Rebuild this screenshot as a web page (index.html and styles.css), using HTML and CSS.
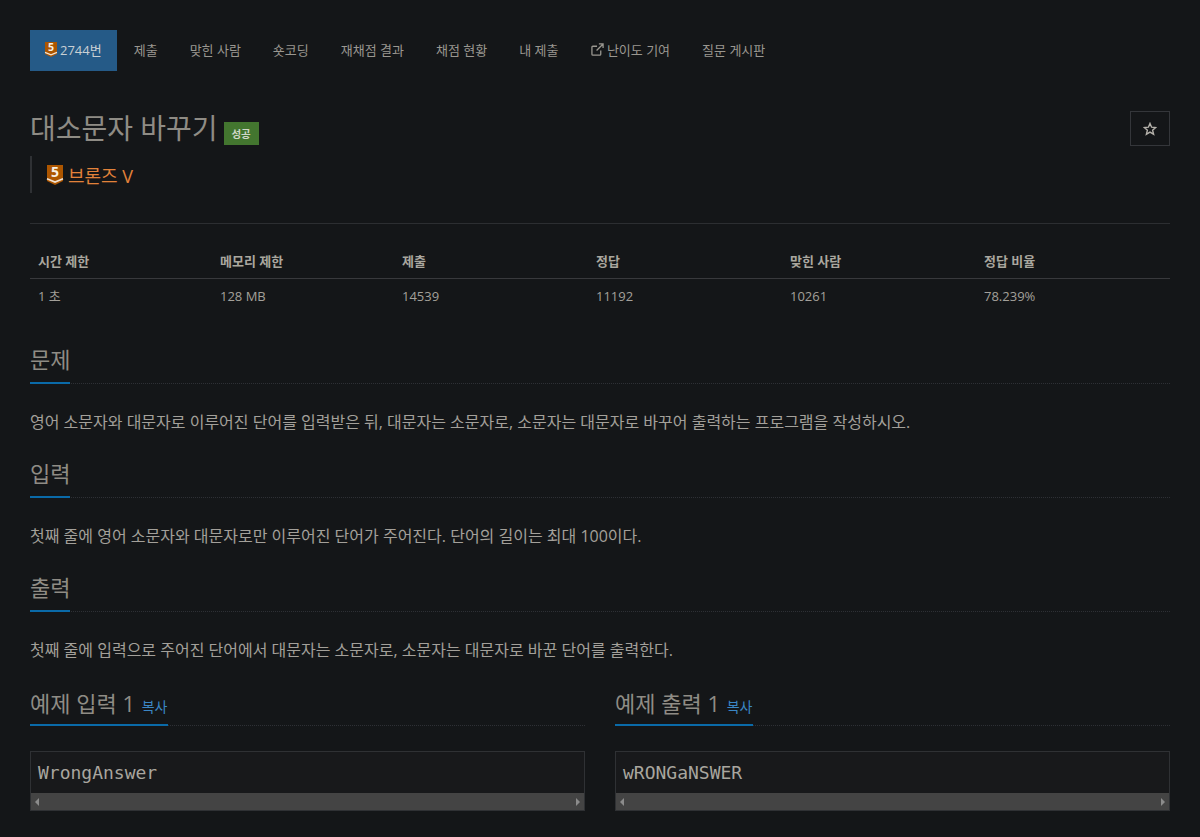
FILE: index.html
```html
<!DOCTYPE html>
<html lang="ko">
<head>
<meta charset="utf-8">
<title>대소문자 바꾸기</title>
<link rel="stylesheet" href="styles.css">
</head>
<body>
<nav class="tabs">
  <a class="tab active"><svg class="tier tier-sm" viewBox="0 0 12 15"><path class="tier-bg" d="M0 0H12V12L6 15L0 12Z"/><path class="tier-cut" d="M0 10.4L6 12.8L12 10.4" /><text x="6" y="9.2" class="tier-num">5</text></svg>2744번</a>
  <a class="tab">제출</a>
  <a class="tab">맞힌 사람</a>
  <a class="tab">숏코딩</a>
  <a class="tab">재채점 결과</a>
  <a class="tab">채점 현황</a>
  <a class="tab">내 제출</a>
  <a class="tab"><svg class="ext" viewBox="0 0 14 14"><path d="M10.5 8V12A1 1 0 0 1 9.5 13H2A1 1 0 0 1 1 12V4.5A1 1 0 0 1 2 3.5H6.5M8.5 1H13V5.5M13 1L6 8"/></svg>난이도 기여</a>
  <a class="tab">질문 게시판</a>
</nav>

<header class="title-row">
  <div class="title-main">
    <h1 class="title">대소문자 바꾸기</h1>
    <span class="badge">성공</span>
  </div>
  <button class="star" aria-label="즐겨찾기"><svg viewBox="0 0 14 14"><path d="M7 1.4L8.6 5.2L12.7 5.5L9.6 8.2L10.6 12.2L7 10.1L3.4 12.2L4.4 8.2L1.3 5.5L5.4 5.2Z"/></svg></button>
</header>

<blockquote class="tier-quote"><svg class="tier tier-lg" viewBox="0 0 12 15"><path class="tier-bg" d="M0 0H12V12L6 15L0 12Z"/><path class="tier-cut" d="M0 10.4L6 12.8L12 10.4"/><text x="6" y="9.2" class="tier-num">5</text></svg><span>브론즈 V</span></blockquote>

<hr class="rule">

<table class="stats">
  <thead>
    <tr><th class="c1">시간 제한</th><th class="c2">메모리 제한</th><th class="c3">제출</th><th class="c3">정답</th><th class="c3">맞힌 사람</th><th>정답 비율</th></tr>
  </thead>
  <tbody>
    <tr><td>1 초</td><td>128 MB</td><td>14539</td><td>11192</td><td>10261</td><td>78.239%</td></tr>
  </tbody>
</table>

<section class="section">
  <div class="head"><h2><span>문제</span></h2></div>
  <p>영어 소문자와 대문자로 이루어진 단어를 입력받은 뒤, 대문자는 소문자로, 소문자는 대문자로 바꾸어 출력하는 프로그램을 작성하시오.</p>
</section>
<section class="section">
  <div class="head"><h2><span>입력</span></h2></div>
  <p>첫째 줄에 영어 소문자와 대문자로만 이루어진 단어가 주어진다. 단어의 길이는 최대 100이다.</p>
</section>
<section class="section">
  <div class="head"><h2><span>출력</span></h2></div>
  <p>첫째 줄에 입력으로 주어진 단어에서 대문자는 소문자로, 소문자는 대문자로 바꾼 단어를 출력한다.</p>
</section>

<div class="samples">
  <section class="sample">
    <div class="head"><h2><span>예제 입력 1 <a class="copy">복사</a></span></h2></div>
    <div class="code"><pre>WrongAnswer</pre><div class="bar"><i class="arrow left"></i><i class="arrow right"></i></div></div>
  </section>
  <section class="sample">
    <div class="head"><h2><span>예제 출력 1 <a class="copy">복사</a></span></h2></div>
    <div class="code"><pre>wRONGaNSWER</pre><div class="bar"><i class="arrow left"></i><i class="arrow right"></i></div></div>
  </section>
</div>
</body>
</html>
```
FILE: styles.css
```css
* { box-sizing: border-box; }
html, body { height: 100%; }
body {
  margin: 0;
  padding: 30px 30px 0;
  background: #141618;
  color: #a3a09a;
  font-family: "Open Sans", "Noto Sans CJK KR", sans-serif;
  font-size: 14px;
  overflow: hidden;
}
.tabs { display: flex; height: 41px; }
.tab {
  display: flex;
  align-items: center;
  padding: 0 16px 2px;
  font-size: 13px;
  color: #9a9790;
  white-space: nowrap;
}
.tab.active { background: #255a87; color: #c9d0d4; padding: 0 15px 2px; margin-right: 1px; }
.tier { display: inline-block; flex: none; overflow: visible; }
.tier-sm { width: 12px; height: 15px; margin-right: 3px; }
.tier-lg { width: 16px; height: 20px; margin-right: 5px; }
.tier-bg { fill: #ad5600; }
.tier-cut { fill: none; stroke: #f2e4d2; stroke-width: 1.2; }
.tier-num { fill: #f7f0e6; font: 700 10.5px "Open Sans", sans-serif; text-anchor: middle; }
.ext { width: 13px; height: 13px; margin: 0 3px 0 .5px; fill: none; stroke: #9a9790; stroke-width: 1.4; }

.title-row { display: flex; justify-content: space-between; align-items: flex-start; margin-top: 40px; }
.title-main { display: flex; align-items: center; gap: 6px; height: 35px; }
.title { margin: 0; font-size: 28px; font-weight: 400; line-height: 35px; color: #8f8c85; }
.badge {
  margin-top: 10px;
  width: 35px;
  height: 23px;
  display: flex;
  align-items: center;
  justify-content: center;
  background: #43762f;
  color: #d0d6c8;
  font-size: 10.5px;
  font-weight: 700;
}
.star {
  width: 40px;
  height: 35px;
  padding: 0;
  background: transparent;
  border: 1px solid #34363a;
  display: flex;
  align-items: center;
  justify-content: center;
}
.star svg { width: 14px; height: 14px; fill: none; stroke: #b4b1aa; stroke-width: 1.4; }

.tier-quote {
  margin: 10px 0 0;
  height: 37px;
  padding-left: 15px;
  border-left: 2px solid #2f3134;
  display: flex;
  align-items: center;
  font-size: 18px;
  color: #e2823a;
}
.rule { margin: 30px 0 0; border: 0; border-top: 1px solid #2c2e31; }

.stats { width: 100%; border-collapse: collapse; table-layout: fixed; margin-top: 19px; font-size: 13px; }
.stats th { text-align: left; padding: 0 8px; height: 35px; font-weight: 700; color: #aaa79f; border-bottom: 1px solid #38393c; }
.stats td { padding: 0 8px; height: 35px; color: #a3a09a; }
.c1, .c2 { width: 182px; }
.c3 { width: 194px; }

.stats + .section { margin-top: 33px; }
.head { border-bottom: 1px dotted #2e3035; height: 38px; }
.head h2 { margin: 0; font-size: 22px; font-weight: 400; line-height: 30px; color: #8f8c85; height: 38px; }
.section .head h2 { line-height: 26px; }
.head h2 span { display: inline-block; height: 38px; border-bottom: 2px solid #0a6aa8; }
.section p { margin: 0; padding: 28px 0 0; height: 76px; font-size: 16px; line-height: 20px; color: #a3a09a; }

.samples { display: flex; gap: 30px; }
.sample { flex: 1; min-width: 0; }
.sample .head h2 span { padding-right: 1px; }
.copy { font-size: 14px; color: #3b86c4; margin-left: 1px; }
.code { margin-top: 25px; border: 1px solid #2f3134; background: #18191b; }
.code pre {
  margin: 0;
  height: 41px;
  padding: 9px 7px 0;
  font-family: "DejaVu Sans Mono", monospace;
  font-size: 18px;
  line-height: 24px;
  color: #a9a69f;
}
.bar { position: relative; height: 17px; background: #444; }
.arrow { position: absolute; top: 5px; width: 0; height: 0; border-top: 4px solid transparent; border-bottom: 4px solid transparent; }
.arrow.left { left: 4px; border-right: 4px solid #8c8c8c; }
.arrow.right { right: 4px; border-left: 4px solid #8c8c8c; }
```
